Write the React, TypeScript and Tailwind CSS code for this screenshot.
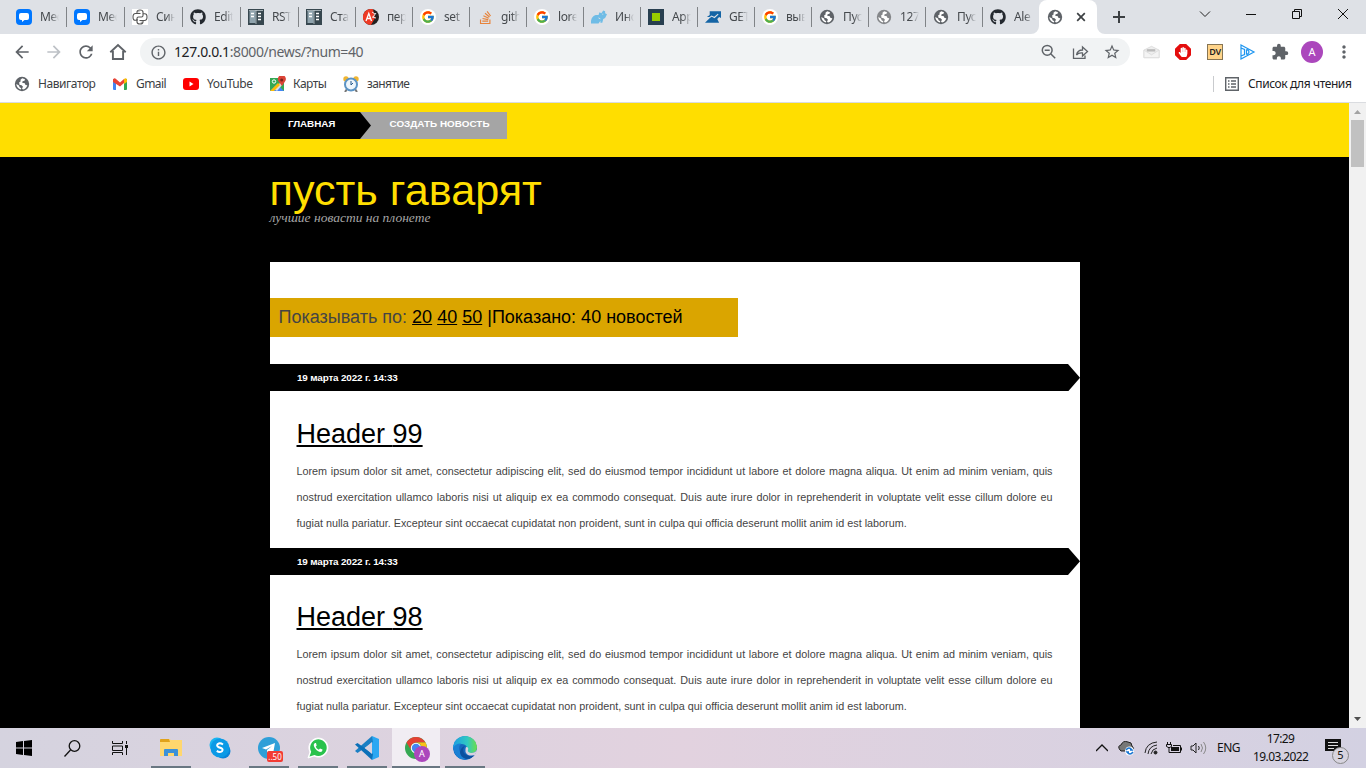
import React from "react";
import { FaGithub, FaStackOverflow, FaHandPaper } from "react-icons/fa";
import { FcGoogle } from "react-icons/fc";
import {
  MdArrowBack, MdArrowForward, MdRefresh, MdInfoOutline,
  MdStarBorder, MdExtension, MdMoreVert,
} from "react-icons/md";

const Globe = ({ color = "#5f6368" }: { color?: string }) => (
  <svg width="16" height="16" viewBox="0 0 16 16" className="shrink-0">
    <circle cx="8" cy="8" r="7.200" fill={color} />
    <path d="M8.200 2.300 11 3.200 10.500 4.800 8.600 5.300 8.200 6.800 10.800 7.300 11.500 9 13.300 9.200Q12.500 12.500 9 13.600L8 12.600 9 10.800 7.600 9.300 5.400 8.800 5.200 6.300 6.600 5.600 6.500 3.800Z" fill="#fff" />
    <path d="M2.300 8 5 9.500 5.600 11.200 7.300 12.200 6.800 13.600Q2.800 12.400 2.300 8Z" fill="#fff" />
  </svg>
);

const Chat = () => (
  <svg width="16" height="16" viewBox="0 0 16 16">
    <rect width="16" height="16" rx="4" fill="#07f" />
    <path d="M5 4h6a2 2 0 0 1 2 2v3a2 2 0 0 1-2 2H8.500L6 13v-2H5a2 2 0 0 1-2-2V6a2 2 0 0 1 2-2Z" fill="#fff" />
  </svg>
);

const Python = () => (
  <svg width="16" height="16" viewBox="0 0 16 16" fill="none" stroke="#555" strokeWidth="1.100">
    <rect width="16" height="16" fill="#fff" stroke="none" />
    <path d="M8.500 4.500H3.500Q1 4.500 1 8t2.500 3.200H5V9.500Q5 8 6.500 8h3Q11 8 11 6.500V3q0-2-3-2T5 3v1.500" />
    <path d="M7.500 11.500h5Q15 11.500 15 8t-2.500-3.200H11M5 10v3q0 2 3 2t3-2v-1.500" />
    <path d="M6.500 2.800h.8M8.800 13.200h.8" />
  </svg>
);

const Book = () => (
  <svg width="16" height="16" viewBox="0 0 16 16">
    <rect width="16" height="16" fill="#37474f" />
    <rect x="1.500" y="2" width="6" height="12" fill="#90a4ae" />
    <rect x="8.500" y="2" width="6" height="12" fill="#37474f" />
    <path d="M3 4.500h3M3 7.500h3M10 4.500h3M10 7.500h3M10 10.500h3" stroke="#fff" strokeWidth="1.300" />
    <path d="M8 1v14M1 1.500h14" stroke="#cfd8dc" strokeWidth=".7" />
  </svg>
);

const Academic = () => (
  <svg width="16" height="16" viewBox="0 0 16 16">
    <circle cx="8" cy="8" r="8" fill="#222" />
    <path d="M10 .300A8 8 0 1 0 8 16L12 9Z" fill="#ee3a24" />
    <path d="M3 12 5.800 4.500 8.500 12M4 9.500h3.800" stroke="#fff" strokeWidth="1.300" fill="none" />
    <path d="M9 3l3 2M10 8l3-4M9 8l4 1" stroke="#eee" />
  </svg>
);

const GoogleTab = () => (
  <span className="flex size-4 items-center justify-center rounded-full bg-white"><FcGoogle size={14} /></span>
);

const Rhino = () => (
  <svg width="17" height="16" viewBox="0 0 17 16">
    <path d="M0 12Q1 7 5 6l3 0 1-3 2 1 2-3 2 1v2l2 1-2 4-2 1-1 4h-2l0-2-2 3H0Z" fill="#6fbce6" />
    <path d="M8 9l2 1M12 5h1" stroke="#dee1e6" />
  </svg>
);

const Square = () => (
  <svg width="16" height="16" viewBox="0 0 16 16"><rect width="16" height="16" fill="#283f50" /><rect x="4" y="4" width="8" height="8" fill="#9c0" /></svg>
);

const Chart = () => (
  <svg width="17" height="12" viewBox="0 0 17 12">
    <path d="M5 0h12v7l-2-1-2 2 2 4H0l4-4 1-2H2l3-2Z" fill="#1464a5" />
    <path d="M3 8l4-3 3 1.500L14 3" stroke="#dee1e6" fill="none" strokeWidth="1.200" />
  </svg>
);

const Gh = () => <FaGithub size={16} color="#24292f" />;
const Stack = () => <FaStackOverflow size={15} color="#e8833a" />;

const wideTabs = [
  { t: "Мес", i: <Chat /> }, { t: "Мес", i: <Chat /> }, { t: "Син", i: <Python /> },
  { t: "Edit", i: <Gh /> }, { t: "RST", i: <Book /> },
];
const tabs = [
  { t: "Ста", i: <Book /> }, { t: "пер", i: <Academic /> }, { t: "set", i: <GoogleTab /> },
  { t: "gith", i: <Stack /> }, { t: "lore", i: <GoogleTab /> }, { t: "Инс", i: <Rhino /> },
  { t: "App", i: <Square /> }, { t: "GET", i: <Chart /> }, { t: "выв", i: <GoogleTab /> },
  { t: "Пус", i: <Globe /> }, { t: "127", i: <Globe color="#85878a" /> }, { t: "Пус", i: <Globe /> },
  { t: "Ale", i: <Gh /> },
];

function Tab({ text, icon, wide, last }: { text: string; icon: React.ReactNode; wide?: boolean; last?: boolean }) {
  return (
    <div className={`flex h-[34px] shrink-0 items-center pl-2 ${wide ? "w-[58px]" : "w-[57px]"}`}>
      <span className="flex w-4 shrink-0 items-center justify-center">{icon}</span>
      <span className="ml-2 w-[19px] overflow-hidden whitespace-nowrap text-[12px] tracking-[-0.4px] text-[#45494d] [mask-image:linear-gradient(to_right,#000_55%,transparent)]">{text}</span>
      {!last && <span className="-mr-px ml-auto h-5 w-px bg-[#808387]" />}
    </div>
  );
}

function TabStrip() {
  return (
    <div className="flex h-[34px] bg-[#dee1e6] pl-2">
      {wideTabs.map((t, i) => <Tab key={i} text={t.t} icon={t.i} wide />)}
      {tabs.map((t, i) => <Tab key={i} text={t.t} icon={t.i} last={i === tabs.length - 1} />)}
      <div className="relative flex h-[34px] w-[58px] shrink-0 items-center rounded-t-lg bg-white pl-2">
        <svg className="absolute -left-2 bottom-0" width="8" height="8"><path d="M8 0v8H0a8 8 0 0 0 8-8Z" fill="#fff" /></svg>
        <svg className="absolute -right-2 bottom-0" width="8" height="8"><path d="M0 0v8h8A8 8 0 0 1 0 0Z" fill="#fff" /></svg>
        <Globe />
        <svg className="ml-[13px]" width="10" height="10" fill="none" stroke="#3c4043" strokeWidth="1.700"><path d="m1.200 1.200 7.600 7.600M8.800 1.200 1.200 8.800" /></svg>
      </div>
      <svg className="ml-4 mt-[11px]" width="12" height="12" fill="none" stroke="#3c4043" strokeWidth="2"><path d="M6 0v12M0 6h12" /></svg>
      <div className="ml-auto flex w-[167px] justify-between pr-[17px] pt-2">
        <svg width="12" height="12" fill="none" stroke="#222"><path d="m1 3.500 5 5 5-5" /></svg>
        <svg width="12" height="12" fill="none" stroke="#111"><path d="M1 6.500h10" /></svg>
        <svg width="12" height="12" fill="none" stroke="#111"><path d="M1.500 3.500h7v7h-7zM3.500 3.500v-2h7v7h-2" /></svg>
        <svg width="12" height="12" fill="none" stroke="#111"><path d="m1 1 10 10M11 1 1 11" /></svg>
      </div>
    </div>
  );
}

function Toolbar() {
  return (
    <div className="flex h-9 items-center bg-white pl-3 text-[#5f6368]">
      <MdArrowBack size={20} />
      <MdArrowForward className="ml-3" size={20} color="#bdc1c6" />
      <MdRefresh className="ml-3" size={20} />
      <svg className="ml-3 mr-px" width="20" height="20" fill="none" stroke="#5f6368" strokeWidth="1.900"><path d="M2.300 10.200 10 3l7.700 7.200M4.900 9v8h10.200V9" /></svg>
      <div className="ml-[11px] flex h-7 w-[990px] items-center rounded-full bg-[#f1f3f4] pl-2.5">
        <MdInfoOutline size={17} />
        <span className="-mt-0.5 ml-[7px] text-[14px] tracking-[-0.4px] text-[#5f6368]"><span className="text-[#202124]">127.0.0.1</span>:8000/news/?num=40</span>
        <svg className="ml-auto" width="16" height="16" fill="none" stroke="#5f6368" strokeWidth="1.500"><circle cx="6.200" cy="6.300" r="4.900" /><path d="m9.700 9.800 4.500 4.500M3.700 6.300h5" /></svg>
        <svg className="ml-[15px] mr-px" width="17" height="16" fill="none" stroke="#5f6368" strokeWidth="1.300">
          <path d="M1.500 4.500v9.800H13v-2.800M4.500 11q1-5 6-5V3l5 4.500-5 4.500V9q-4-.5-6 2Z" />
        </svg>
        <MdStarBorder className="ml-[13px] mr-[9px]" size={18} />
      </div>
      <div className="ml-[13px] flex items-center">
        <svg width="17" height="14" viewBox="0 1 18 14"><path d="m1 6 8-4 8 4v8H1Z" fill="#eee" stroke="#ddd" /><path d="M4 5h9v2.500H4Z" fill="#bbb" /><path d="m1 6 8 5 8-5v8H1Z" fill="#f4f4f4" stroke="#ddd" /></svg>
        <span className="ml-[15px] flex size-4 items-center justify-center bg-[#e40d0d] [clip-path:polygon(30%_0,70%_0,100%_30%,100%_70%,70%_100%,30%_100%,0_70%,0_30%)]"><FaHandPaper size={10} color="#fff" /></span>
        <span className="ml-4 flex size-4 items-center justify-center border border-[#877553] bg-[#ffd48a] text-[9px] font-semibold tracking-[-0.3px] text-[#222]">DV</span>
        <svg className="ml-[17px]" width="16" height="16" fill="none" stroke="#1e96f0" strokeWidth="1.200"><path d="M1 1v14l13-7ZM1 4l3.500 1.500v5L1 12M6.500 5.800v4.400h1q3-2.200 0-4.400Z" /></svg>
        <MdExtension className="ml-[15px]" size={18} />
        <span className="ml-3 flex size-[22px] items-center justify-center rounded-full bg-[#ab47bc] text-[11px] text-white">A</span>
        <MdMoreVert className="ml-[11px]" size={20} />
      </div>
    </div>
  );
}

function Bookmarks() {
  return (
    <div className="flex h-[33px] items-center border-b border-[#dadce0] bg-white pb-[5px] pl-[14px] text-[12px] text-[#3c4043] [&_span]:mt-px [&_span]:whitespace-nowrap">
      <Globe />
      <span className="ml-2 w-[58px] tracking-[-0.45px]">Навигатор</span>
      <svg className="ml-4" width="16" height="12" viewBox="0 0 16 12">
        <path d="M1 1h3v11H2a1 1 0 0 1-1-1Z" fill="#4285f4" /><path d="M12 1h3v10a1 1 0 0 1-1 1h-2Z" fill="#34a853" />
        <path d="M1 1.500Q2.500-.500 4 1l4 3.500L12 1v4L8 8.500 1 4Z" fill="#ea4335" /><path d="M12 1q2-1.500 3 .500V4l-3 2Z" fill="#fbbc04" />
      </svg>
      <span className="ml-2 w-[31px] tracking-[-0.6px]">Gmail</span>
      <svg className="ml-4" width="16" height="12"><rect width="16" height="12" rx="3" fill="red" /><path d="m6.500 3.500 4 2.500-4 2.500Z" fill="#fff" /></svg>
      <span className="ml-2 w-[46px] tracking-[-0.4px]">YouTube</span>
      <svg className="ml-[17px]" width="16" height="16" viewBox="0 0 16 16">
        <path d="M0 2h14v13H0Z" fill="#34a853" /><path d="M0 15 7 8l7 7Z" fill="#4285f4" /><path d="m4 13 9-9v4l-6 7Z" fill="#ddd" /><path d="m0 15 8-8 2 2-6 6Z" fill="#fbbc04" />
        <path d="M8 4a4 4 0 1 1 7 1.500L12 10 9 6Q8 5 8 4Z" fill="#db4437" /><circle cx="11.700" cy="4" r="1.500" fill="#7b231c" /><circle cx="4" cy="5.500" r="1.700" fill="none" stroke="#fff" />
      </svg>
      <span className="ml-[7px] w-[34px] tracking-[-0.5px]">Карты</span>
      <svg className="ml-4" width="16" height="16" viewBox="0 0 16 16">
        <circle cx="3" cy="3" r="2.700" fill="#f0b531" /><circle cx="13" cy="3" r="2.700" fill="#f0b531" /><path d="m4 13-2 3M12 13l2 3" stroke="#777" strokeWidth="2" />
        <circle cx="8" cy="8.500" r="6" fill="#eef6fc" stroke="#5b93c4" strokeWidth="2" /><path d="M8 5v4l2-2" stroke="#27598a" fill="none" />
      </svg>
      <span className="ml-2 tracking-[-0.6px]">занятие</span>
      <div className="ml-auto flex items-center pr-[14px]">
        <i className="h-4 w-px bg-[#c9cbce]" />
        <svg className="ml-[11px]" width="14" height="14" fill="none" stroke="#5f6368" strokeWidth="1.400"><path d="M.700.700h12.600v12.600H.700ZM3 4h1.500M3 7h1.500M3 10h1.500M6 4h5M6 7h5M6 10h5" /></svg>
        <span className="ml-[9px] w-[104px] tracking-[-0.41px] text-[#202124]">Список для чтения</span>
      </div>
    </div>
  );
}

const body =
  "Lorem ipsum dolor sit amet, consectetur adipiscing elit, sed do eiusmod tempor incididunt ut labore et dolore magna aliqua. Ut enim ad minim veniam, quis nostrud exercitation ullamco laboris nisi ut aliquip ex ea commodo consequat. Duis aute irure dolor in reprehenderit in voluptate velit esse cillum dolore eu fugiat nulla pariatur. Excepteur sint occaecat cupidatat non proident, sunt in culpa qui officia deserunt mollit anim id est laborum.";

function Article({ n }: { n: number }) {
  return (
    <article className="h-[183.6px]">
      <div className="h-[27.4px] bg-black pl-[27px] text-[9.9px] font-bold leading-[27.2px] tracking-[-0.15px] text-white [clip-path:polygon(0_0,798px_0,100%_50%,798px_100%,0_100%)]">19 марта 2022 г. 14:33</div>
      <div className="pl-[26.5px] pr-[27.5px] pt-[27.500px]">
        <h2 className="text-[27px] leading-[31px] text-black underline">Header {n}</h2>
        <p className="mt-[9px] text-justify text-[10.8px] leading-[25.9px] text-[#444]">{body}</p>
      </div>
    </article>
  );
}

function Page() {
  return (
    <div className="flex h-[625px] font-['Liberation_Sans',Arial,sans-serif]">
      <main className="h-full flex-1 overflow-hidden bg-black">
        <header className="h-[54px] bg-[#ffde00] pl-[270px] pt-[9px]">
          <nav className="flex h-[27px] w-[237px] bg-[#a5a5a5] text-[9.9px] font-bold leading-[24px] text-white">
            <a className="w-[101px] bg-black pl-[18px] tracking-[-0.1px] [clip-path:polygon(0_0,90px_0,100%_50%,90px_100%,0_100%)]">ГЛАВНАЯ</a>
            <a className="whitespace-nowrap pl-[18.500px] tracking-[0.02px]">СОЗДАТЬ НОВОСТЬ</a>
          </nav>
        </header>
        <div className="h-[105px] pl-[269.500px] pt-[8px]">
          <h1 className="text-[43.2px] leading-[50px] text-[#ffde00]">пусть гаварят</h1>
          <p className="-mt-[5px] font-['Liberation_Serif',serif] text-[13.5px] italic leading-[16px] text-[#a5a5a5]">лучшие новасти на плонете</p>
        </div>
        <section className="ml-[270px] w-[810px] bg-white pt-9">
          <div className="mb-[27px] h-[39px] w-[468px] bg-[#daa500] pl-[8.500px] text-[18px] leading-[38px] text-[#444]">
            Показывать по: <span className="text-black"><u>20</u> <u>40</u> <u>50</u> |Показано: 40 новостей</span>
          </div>
          <Article n={99} />
          <Article n={98} />
        </section>
      </main>
      <aside className="flex w-[17px] flex-col items-center bg-[#f1f1f1]">
        <svg width="17" height="17"><path d="M5 11h7L8.500 7Z" fill="#a3a3a3" /></svg>
        <i className="h-[47px] w-[13px] bg-[#c1c1c1]" />
        <svg className="mt-auto" width="17" height="17"><path d="M5 6h7l-3.500 4Z" fill="#505050" /></svg>
      </aside>
    </div>
  );
}

const Explorer = () => (
  <svg width="22" height="20"><path d="M0 2q0-1 1-1h8l2 1h11v16H0Z" fill="#ffd76e" /><path d="M0 2q0-1 1-1h8l1 3H0Z" fill="#e0a21b" /><path d="M4 18v-6q0-1 1-1h12q1 0 1 1v6h-4v-3H8v3Z" fill="#3c91d8" /></svg>
);
const Skype = () => (
  <svg width="22" height="22"><circle cx="8" cy="8" r="7.500" fill="#19b5f1" /><circle cx="14" cy="14" r="7.500" fill="#0a84d8" /><circle cx="11" cy="11" r="9.500" fill="#0b9ae6" /><path d="M14 7.500Q11 5.500 8.800 7q-1.500 1.800.4 3l3.200 1.200q2 1.200.6 3-2.500 1.800-5.200-.3" fill="none" stroke="#fff" strokeWidth="2" /></svg>
);
const Telegram = () => (
  <span className="relative flex">
    <svg width="22" height="22"><circle cx="11" cy="11" r="11" fill="#2e9fd8" /><path d="m4 11 13-5-2 11-4-3-2 2v-3l5-4-6 3.500Z" fill="#fff" /></svg>
    <span className="absolute left-[9px] top-[14px] h-[11px] w-4 rounded-[2px] bg-[#f23c34] text-center text-[8px] leading-[11px] text-white">..50</span>
  </span>
);
const WhatsApp = () => (
  <svg width="22" height="22"><path d="m1 21 2-6a9.500 9.500 0 1 1 4 4Z" fill="#fff" stroke="#fff" /><path d="m2.500 19.500 1.700-4.700a8.300 8.300 0 1 1 3.300 3.200Z" fill="#29c24c" /><path d="M8 6q-2 1-.7 4 2 4 5.700 5 2.500 0 2.500-2.500l-2.500-1-1.200 1.300Q9.500 12 8.700 9.800L9.700 8.500 9 6Z" fill="#fff" /></svg>
);
const Code = () => (
  <svg width="24" height="24"><path d="m17 0 7 3v18l-7 3Z" fill="#2aa7f2" /><path d="M17 0 0 15l2.500 2L18 6Z" fill="#1b80c4" /><path d="M17 24 0 8.500 2.500 7 18 18Z" fill="#0b70b8" /><path d="m17 6-7 6 7 6Z" fill="#d8d2e0" /></svg>
);
const Chrome = () => (
  <span className="relative flex">
    <svg width="22" height="22"><circle cx="11" cy="11" r="11" fill="#36a853" /><path d="M1.500 5.500a11 11 0 0 1 19 0H11a5.500 5.500 0 0 0-5 7.500Z" fill="#e34133" /><path d="M20.500 5.500A11 11 0 0 1 11 22l5-8.500a5.500 5.500 0 0 0-5-8Z" fill="#fbc116" /><circle cx="11" cy="11" r="5.200" fill="#fff" /><circle cx="11" cy="11" r="4.200" fill="#4285f4" /></svg>
    <span className="absolute left-[9px] top-[9px] flex size-4 items-center justify-center rounded-full bg-[#ab47bc] text-[9px] text-white">A</span>
  </span>
);
const Edge = () => (
  <svg width="24" height="24">
    <defs>
      <linearGradient id="eg"><stop stopColor="#1c9de3" /><stop offset=".6" stopColor="#31c9c1" /><stop offset="1" stopColor="#6bdf49" /></linearGradient>
      <clipPath id="ec"><circle cx="12" cy="12" r="12" /></clipPath>
    </defs>
    <g clipPath="url(#ec)">
      <circle cx="12" cy="12" r="12" fill="#1566bd" />
      <path d="M0 11a12 12 0 0 1 24 0q0 6-6 6-5 0-4-3Q15 9 9 8 3 8 0 13Z" fill="url(#eg)" />
      <path d="M0 12q3-5 8-4.500Q5 11 7 16t8 7Q3 26 0 12Z" fill="#1a80d4" />
      <path d="M12 10q-3 3-1 7 4 5 11 2-4 4-9 4-6-2-6-7 1-5 5-6Z" fill="#0c4f9e" />
      <path d="M13 11q3 0 2 3-1 2 3 3 4 0 6-3v4q-4 2.500-9 1-4-3-2-8Z" fill="#d8d2e0" />
    </g>
  </svg>
);

const apps = [
  { i: <Explorer />, c: "ml-[151px] w-10", l: true }, { i: <Skype />, c: "ml-[9px] w-10", l: false },
  { i: <Telegram />, c: "ml-[9px] w-10", l: true }, { i: <WhatsApp />, c: "ml-[9px] w-10", l: true },
  { i: <Code />, c: "ml-[9px] w-10", l: true }, { i: <Chrome />, c: "ml-[5px] w-12 bg-[#f1edf3]", l: true },
  { i: <Edge />, c: "ml-[5px] w-10", l: true },
];

function Taskbar() {
  return (
    <footer className="flex h-10 items-stretch bg-linear-to-r from-[#d5d3df] via-[#e2d2df] to-[#d3d1e2]">
      <div className="-mr-[151px] flex w-[151px] shrink-0 items-center pl-4">
        <svg width="16" height="16"><path d="m0 2 7-1v6.500H0ZM8 .900 16 0v7.500H8ZM0 8.500h7V15l-7-1ZM8 8.500h8V16l-8-1Z" fill="#000" /></svg>
        <svg className="ml-8" width="17" height="17" fill="none" stroke="#111" strokeWidth="1.300"><circle cx="10.500" cy="6" r="5.300" /><path d="M6.500 10 .500 16.500" /></svg>
        <svg className="ml-[30px]" width="18" height="16" fill="none" stroke="#111"><path d="M1.500 1v2.500h10V1M1.500 15v-2.500h10V15M1.500 6v4.500h10V6ZM15.500 1v3M15.500 8v7" /><path d="M14 5h3v3h-3Z" fill="#111" stroke="none" /></svg>
      </div>
      {apps.map((a, i) => (
        <div key={i} className={`flex shrink-0 flex-col items-center ${a.c}`}>
          <div className="flex h-[38px] items-center pt-[2px]">{a.i}</div>
          {a.l && <i className="h-0.5 w-full bg-[#697782]" />}
        </div>
      ))}
      <div className="ml-auto flex items-center text-[12px] text-[#111]">
        <svg width="12" height="8" fill="none" stroke="#111" strokeWidth="1.300"><path d="m0 7 6-6 6 6" /></svg>
        <svg className="ml-[10px]" width="17" height="15"><path d="M2 9Q-1 5 3 4q2-5 7-3 4 0 4 4Q17 7 14 10H3Z" fill="#777" stroke="#222" /><circle cx="11.500" cy="10" r="4.500" fill="#fff" /><path d="M8 9q3-4 6 0h-2M15 11q-3 4-6 0h2" fill="none" stroke="#1976d2" strokeWidth="1.500" /></svg>
        <svg className="ml-[9px]" width="14" height="14" fill="none" stroke="#222"><path d="M1 12Q2 2 13 1M4 13Q5 5 13 4M7 13Q8 8 13 7" /><circle cx="11.500" cy="11.500" r="1.500" fill="#222" /></svg>
        <svg className="ml-[8px]" width="17" height="14"><path d="M1.500 1v3M4.500 1v3M.500 3.500h5v2q-2.500 2.500-5 0ZM3 7v4.500h11.500v-7H7" fill="none" stroke="#111" /><path d="M5 6h8v4H5ZM15 6.500h1v3h-1Z" fill="#111" /></svg>
        <svg className="ml-[7px]" width="17" height="14" fill="none" stroke="#222"><path d="M1 5h2l3-3v10L3 9H1ZM8.500 5q1.500 2 0 4" /><path d="M11 3q3 4 0 8M13.500 1q4.500 6 0 12" stroke="#888" /></svg>
        <span className="ml-[10px] w-[24px] tracking-[-0.5px]">ENG</span>
        <div className="ml-[12px] w-[55px] text-center leading-[18px] tracking-[-0.6px]"><div>17:29</div><div>19.03.2022</div></div>
        <div className="relative ml-[17px] mr-[25px] h-[20px] w-4">
          <svg width="17" height="17"><path d="M0 1h16v12h-3v4l-4-4H0Z" fill="#111" /><path d="M3 4.500h10M3 7.500h10M3 10.500h6" stroke="#ddd" /></svg>
          <span className="absolute left-[7px] top-[9px] flex size-[17px] items-center justify-center rounded-full border border-[#888] bg-[#d7d4df] text-[11px]">5</span>
        </div>
      </div>
    </footer>
  );
}

export default function App() {
  return (
    <div className="h-[768px] w-[1366px] overflow-hidden font-['Noto_Sans','Open_Sans',sans-serif]">
      <TabStrip />
      <Toolbar />
      <Bookmarks />
      <Page />
      <Taskbar />
    </div>
  );
}
